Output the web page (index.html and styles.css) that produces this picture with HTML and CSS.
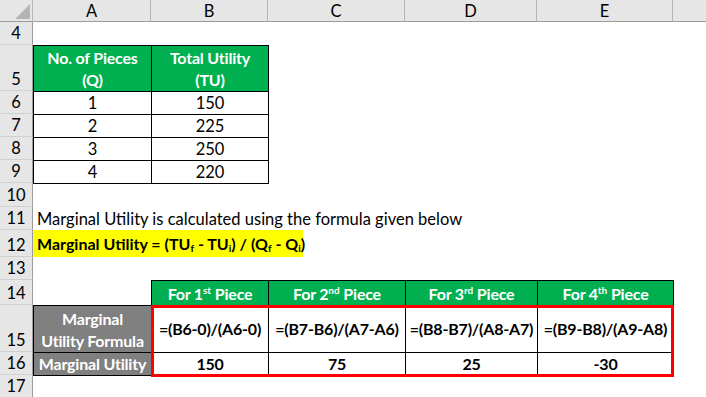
FILE: index.html
```html
<!DOCTYPE html>
<html>
<head>
<meta charset="utf-8">
<link rel="stylesheet" href="styles.css">
</head>
<body>
<div class="sheet">
  <div class="corner"><svg width="33" height="22" viewBox="0 0 33 22"><polygon points="15,19 30,19 30,4" fill="#b5b5b5"/></svg></div>
  <div class="colhead">A</div>
  <div class="colhead">B</div>
  <div class="colhead">C</div>
  <div class="colhead">D</div>
  <div class="colhead">E</div>
  <div class="colhead last"></div>

  <div class="rowhead r4">4</div>
  <div class="rowhead r5">5</div>
  <div class="rowhead r6">6</div>
  <div class="rowhead r7">7</div>
  <div class="rowhead r8">8</div>
  <div class="rowhead r9">9</div>
  <div class="rowhead r10">10</div>
  <div class="rowhead r11">11</div>
  <div class="rowhead r12">12</div>
  <div class="rowhead r13">13</div>
  <div class="rowhead r14">14</div>
  <div class="rowhead r15">15</div>
  <div class="rowhead r16">16</div>
  <div class="rowhead r17">17</div>

  <div class="cell green bold r5 ca"><span>No. of Pieces<br>(Q)</span></div>
  <div class="cell green bold r5 cb"><span>Total Utility<br>(TU)</span></div>

  <div class="cell r6 ca"><span>1</span></div><div class="cell r6 cb"><span>150</span></div>
  <div class="cell r7 ca"><span>2</span></div><div class="cell r7 cb"><span>225</span></div>
  <div class="cell r8 ca"><span>3</span></div><div class="cell r8 cb"><span>250</span></div>
  <div class="cell r9 ca"><span>4</span></div><div class="cell r9 cb"><span>220</span></div>

  <div class="text r11 span-all"><span>Marginal Utility is calculated using the formula given below</span></div>
  <div class="text r12 span-all"><span class="highlight">Marginal Utility = (TU<sub>f</sub> - TU<sub>i</sub>) / (Q<sub>f</sub> - Q<sub>i</sub>)</span></div>

  <div class="cell green bold r14 cb"><span>For 1<sup>st</sup> Piece</span></div>
  <div class="cell green bold r14 cc"><span>For 2<sup>nd</sup> Piece</span></div>
  <div class="cell green bold r14 cd"><span>For 3<sup>rd</sup> Piece</span></div>
  <div class="cell green bold r14 ce"><span>For 4<sup>th</sup> Piece</span></div>

  <div class="cell gray bold r15 ca"><span>Marginal<br>Utility Formula</span></div>
  <div class="cell bold mid r15 cb"><span>=(B6-0)/(A6-0)</span></div>
  <div class="cell bold mid r15 cc"><span>=(B7-B6)/(A7-A6)</span></div>
  <div class="cell bold mid r15 cd"><span>=(B8-B7)/(A8-A7)</span></div>
  <div class="cell bold mid r15 ce"><span>=(B9-B8)/(A9-A8)</span></div>

  <div class="cell gray bold r16 ca"><span>Marginal Utility</span></div>
  <div class="cell bold r16 cb"><span>150</span></div>
  <div class="cell bold r16 cc"><span>75</span></div>
  <div class="cell bold r16 cd"><span>25</span></div>
  <div class="cell bold r16 ce"><span>-30</span></div>

  <div class="redbox"></div>
</div>
</body>
</html>
```

FILE: styles.css
```css
html, body {
  margin: 0;
  padding: 0;
  background: #ffffff;
}
body {
  width: 706px;
  height: 397px;
  overflow: hidden;
  font-family: Lato, "Open Sans", sans-serif;
  font-size: 16px;
  color: #000;
}
.sheet {
  display: grid;
  grid-template-columns: 33px 118px 117px 137px 132px 136px 1fr;
  grid-template-rows: 22px 23px 46px 23px 23px 23px 23px 24px 23px 27px 23px 25px 47px 23px 1fr;
  width: 706px;
  height: 397px;
}
.corner {
  grid-row: 1;
  grid-column: 1;
  background: #e6e6e6;
  border-right: 1px solid #b8b8b8;
  border-bottom: 1px solid #9c9c9c;
  box-sizing: border-box;
}
.corner svg { display: block; }
.colhead {
  grid-row: 1;
  background: #e6e6e6;
  border-right: 1px solid #b4b4b4;
  border-bottom: 1px solid #9c9c9c;
  box-sizing: border-box;
  display: flex;
  align-items: center;
  justify-content: center;
  font-size: 16.5px;
  line-height: 22px;
}
.colhead.last { border-right: none; }
.rowhead {
  grid-column: 1;
  background: #e6e6e6;
  border-right: 1px solid #9c9c9c;
  border-bottom: 1px solid #cfcfcf;
  box-sizing: border-box;
  display: flex;
  align-items: flex-end;
  justify-content: center;
  font-size: 16.5px;
  line-height: 22px;
}
.r4 { grid-row: 2; }
.r5 { grid-row: 3; }
.r6 { grid-row: 4; }
.r7 { grid-row: 5; }
.r8 { grid-row: 6; }
.r9 { grid-row: 7; }
.r10 { grid-row: 8; }
.r11 { grid-row: 9; }
.r12 { grid-row: 10; }
.r13 { grid-row: 11; }
.r14 { grid-row: 12; }
.r15 { grid-row: 13; }
.r16 { grid-row: 14; }
.r17 { grid-row: 15; }
.ca { grid-column: 2; }
.cb { grid-column: 3; }
.cc { grid-column: 4; }
.cd { grid-column: 5; }
.ce { grid-column: 6; }
.span-all { grid-column: 2 / 8; }

.cell {
  border: 1px solid #000;
  margin: 0 -1px -1px 0;
  display: flex;
  align-items: flex-end;
  justify-content: center;
  text-align: center;
  line-height: 22px;
  font-size: 16.5px;
  white-space: nowrap;
}
.cell.bold { font-size: 16px; letter-spacing: -0.2px; }
.cell.mid { align-items: center; }
.green { background: #00b050; color: #fff; }
.gray { background: #808080; color: #fff; }
.bold { font-weight: bold; }
.text {
  display: flex;
  align-items: flex-end;
  padding-left: 4px;
  white-space: nowrap;
  line-height: 22px;
  font-size: 16.5px;
}
.r12.text { padding-left: 0; }
.highlight {
  background: #ffff00;
  font-weight: bold;
  display: block;
  width: 266px;
  padding-left: 4px;
  height: 27px;
  line-height: 27px;
  font-size: 16px;
}
sub {
  font-size: 10px;
  vertical-align: -2px;
  line-height: 0;
}
sup {
  font-size: 10px;
  vertical-align: 6px;
  line-height: 0;
  letter-spacing: 0;
}
.redbox {
  grid-row: 13 / 15;
  grid-column: 3 / 7;
  border: 3px solid #ff0000;
  margin: 0 -1px -2px 0;
  z-index: 2;
  pointer-events: none;
}
```
